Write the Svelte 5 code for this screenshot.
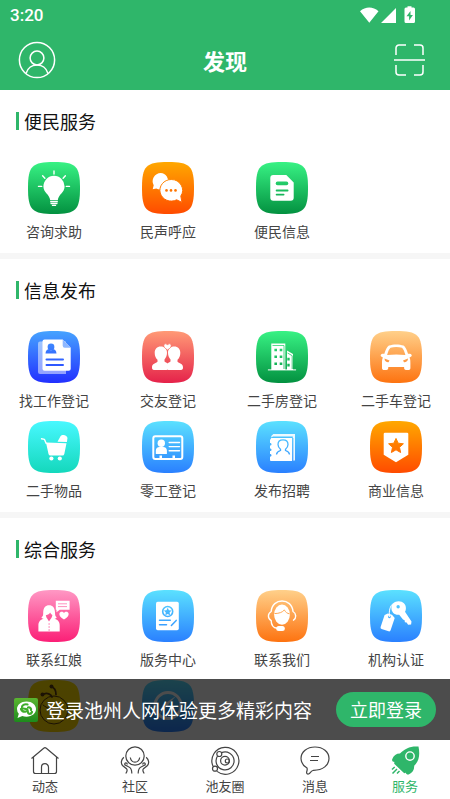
<script lang="ts">
	type Item = { icon: string; from: string; to: string; label?: string }

	const sections: { title: string; items: Item[] }[] = [
		{
			title: '便民服务',
			items: [
				{ icon: 'bulb', from: '#38f284', to: '#039140', label: '咨询求助' },
				{ icon: 'chat', from: '#ffa800', to: '#ff4b00', label: '民声呼应' },
				{ icon: 'doc', from: '#38f284', to: '#039140', label: '便民信息' }
			]
		},
		{
			title: '信息发布',
			items: [
				{ icon: 'resume', from: '#46a3ff', to: '#2230ff', label: '找工作登记' },
				{ icon: 'couple', from: '#ff9a76', to: '#e5224a', label: '交友登记' },
				{ icon: 'building', from: '#38f284', to: '#039140', label: '二手房登记' },
				{ icon: 'car', from: '#ffd08a', to: '#fd7310', label: '二手车登记' },
				{ icon: 'cart', from: '#48f8ff', to: '#14d8bc', label: '二手物品' },
				{ icon: 'card', from: '#5be1ff', to: '#2a80ff', label: '零工登记' },
				{ icon: 'book', from: '#5be1ff', to: '#2a80ff', label: '发布招聘' },
				{ icon: 'shield', from: '#ffa800', to: '#ff4b00', label: '商业信息' }
			]
		},
		{
			title: '综合服务',
			items: [
				{ icon: 'lady', from: '#ff98c4', to: '#fb1f76', label: '联系红娘' },
				{ icon: 'notice', from: '#5be1ff', to: '#2a80ff', label: '版务中心' },
				{ icon: 'support', from: '#ffd08a', to: '#fd7310', label: '联系我们' },
				{ icon: 'keys', from: '#5be1ff', to: '#2a80ff', label: '机构认证' },
				{ icon: 'bee', from: '#ffe000', to: '#ffd800' },
				{ icon: 'compass', from: '#5be1ff', to: '#2a80ff' }
			]
		}
	]

	const tabs = [
		{ icon: 'home', label: '动态' },
		{ icon: 'community', label: '社区' },
		{ icon: 'orbit', label: '池友圈' },
		{ icon: 'message', label: '消息' },
		{ icon: 'rocket', label: '服务' }
	]

	let active = $state('rocket')
</script>

{#snippet glyph(name: string, tint: string)}
	{#if name === 'bulb'}
		<path d="M26 13.8a10.6 10.6 0 0 0-10.6 10.6c0 6.2 6.2 7.6 6.8 13.8h7.6c.6-6.200 6.800-7.600 6.800-13.800A10.600 10.600 0 0 0 26 13.800z" />
		<path class="line" d="M22.700 39.800h6.600M23 41.600h6M24.500 43.400h3M26 9v3M10.500 24.400h3.200M38.300 24.400h3.200M14.600 13.700l2.300 2.600M37.400 13.700l-2.300 2.600" />
	{:else if name === 'chat'}
		<path d="M18.700 11a8.200 8.200 0 0 0-7 12.300l-1 4 3.500-.9A8.200 8.200 0 1 0 18.700 11z" />
		<path stroke={tint} stroke-width="1" d="M29.200 17.500a11.400 10.800 0 1 0 5.500 20.300l5.300 2.600-1.200-6.300a11.400 10.800 0 0 0-9.600-16.600z" />
		<g fill={tint}><circle cx="24.500" cy="28.400" r="1.300" /><circle cx="29" cy="28.400" r="1.300" /><circle cx="33.500" cy="28.400" r="1.300" /></g>
	{:else if name === 'doc'}
		<path d="M17.300 13h13l7.400 7.400v15.300a3 3 0 0 1-3 3H17.300a3 3 0 0 1-3-3V16a3 3 0 0 1 3-3z" />
		<g stroke={tint} stroke-linecap="round"><path stroke-width="3.600" d="M21.500 21.400h9" /><path stroke-width="1.800" d="M20.600 28.500h11M20.600 32.600h7" /></g>
	{:else if name === 'resume'}
		<path opacity="0.500" d="M12 10.500h26V43H12a2 2 0 0 1-2-2V12.500a2 2 0 0 1 2-2z" />
		<path d="M16.500 8.400h18.200l8 8.400v21a2 2 0 0 1-2 2H16.500a2 2 0 0 1-2-2V10.400a2 2 0 0 1 2-2z" />
		<path fill="#8fb8ff" d="M34.700 8.400l8 8.400h-6a2 2 0 0 1-2-2z" />
		<g fill={tint}><circle cx="23" cy="16" r="3.400" /><path d="M17.500 22.500c0-3 2.200-4.400 4-4.400l1.500 1.600 1.500-1.600c1.800 0 4 1.400 4 4.400z" /></g>
		<path stroke={tint} stroke-width="2" stroke-linecap="round" d="M18.500 28.500h16.500M18.500 34h16.500" />
	{:else if name === 'couple'}
		<path d="M18.700 15.500c4 0 6.300 2.600 6.300 6.300 0 3-1 5-2.500 6.700v2c2 1.600 4 1.400 4 4.500 0 2.500-.8 4-2 4H12c-1.500 0-2-.8-2-2.400 0-4 2.800-3.800 5.500-5.800v-2c-1.800-1.500-2.800-4-2.800-7 0-3.700 2.300-6.300 6-6.300z" />
		<path d="M32.300 15.500c-4 0-6.300 2.600-6.300 6.300 0 3 1 5 2.500 6.700v2c-2 1.600-4 1.400-4 4.500 0 2.500.8 4 2 4H39c1.500 0 2-.8 2-2.400 0-4-2.800-3.800-5.500-5.800v-2c1.800-1.500 2.800-4 2.800-7 0-3.700-2.300-6.300-6-6.300z" />
		<path stroke={tint} stroke-width=".7" d="M25.500 19c-3-2-4-3.300-3.600-4.900.5-1.700 2.700-1.700 3.600 0 .9-1.700 3.100-1.700 3.600 0 .4 1.600-.6 2.900-3.600 4.900z" />
	{:else if name === 'building'}
		<path d="M15.300 12.500h14V39h-14zM31 19.500l6 3.600V39h-6z" />
		<path stroke={tint} stroke-width=".8" d="M16.500 14.500h11.500M28 14.500V38M31.500 22l4.700 2.700V38" fill="none" />
		<path class="line thin" d="M12.300 38.900h27.400" />
		<path fill={tint} d="M18.400 17.700h2.600v2.600h-2.600zM23.700 17.700h2.600v2.600h-2.600zM18.400 24.500h2.600v2.600h-2.600zM23.700 24.500h2.600v2.600h-2.600zM18.400 31.400h2.600V34h-2.600zM23.700 31.400h2.600V34h-2.600zM31.300 26.800h2.400v2.600h-2.400zM31.300 32.800h2.400v2.600h-2.400z" />
	{:else if name === 'car'}
		<path d="M19 14.600c4-1.600 10.500-1.600 14.500 0 1.800.9 3.600 5 4.500 8.200 1-.3 3.200-.3 3.700 1.200.3 1.300-1 2.200-2.200 2.400.8 1.500.9 3.500.9 5.500v5c0 1.500-.8 2-2.300 2h-2c-1.600 0-2-.8-2-3H18.300c0 2.200-.4 3-2 3h-2c-1.500 0-2.300-.5-2.300-2v-5c0-2 .1-4 .9-5.500-1.200-.2-2.500-1.100-2.200-2.400.5-1.500 2.700-1.500 3.700-1.200.9-3.200 2.700-7.300 4.600-8.200z" />
		<path fill={tint} d="M20.500 16.700c3.500-1 8-1 11.500 0 1.400 1 2.500 4.200 3.400 7.300-6-.8-12.300-.8-18.300 0 .9-3.100 2-6.300 3.400-7.300zM14.500 27.600l5 2-1 1.600c-2 .1-4-.7-4-3.600zM38 27.600l-5 2 1 1.600c2 .1 4-.7 4-3.600z" />
	{:else if name === 'cart'}
		<path d="M18 21.600l20.500.6L36.300 33a2 2 0 0 1-2 1.600H22.500a2 2 0 0 1-2-1.500z" />
		<path class="line" stroke-width="2" d="M13.500 17.800l3 .6 1.700 4" />
		<path d="M29.500 20.700l3-5.400c1.600-2.600 7.200-.8 6.900 2.200l-.5 3.600z" />
		<circle cx="23.400" cy="37.500" r="2.100" /><circle cx="31.800" cy="37.500" r="2.100" />
	{:else if name === 'card'}
		<rect x="11.300" y="15.200" width="29" height="22.800" rx="2" fill="none" stroke="#fff" stroke-width="2" />
		<circle cx="19.300" cy="22.200" r="3.700" />
		<path d="M13.800 33v-3.500c0-2.500 2-3.600 3.700-3.600h3.700c1.900 0 3.700 1.100 3.700 3.600V33zM17.500 34.400h2.500V37h-2.500zM30.500 34.400H33V37h-2.500z" />
		<path class="line" d="M27.200 21.500h10.300M27.200 25.600h10.300M27.200 29.800h10.300" />
	{:else if name === 'book'}
		<path d="M15.300 16.600v-1.500l2-2H39v26.500h-2.200V15.600H17z" opacity=".9" />
		<path d="M15.300 17H36v23H15.300c-.8 0-1.300-.5-1.300-1.300v-3c2 0 2-2.600 0-2.600v-3c2 0 2-2.600 0-2.600v-3c2 0 2-2.600 0-2.600v-3z" />
		<path fill="none" stroke={tint} stroke-width="1.300" d="M20.500 33.500c.2-2.500 2-3.300 4-4v-1.300c-1.600-1.200-2.500-2.800-2.500-4.600 0-3 2-4.700 5-4.700s5 1.700 5 4.700c0 1.800-.9 3.400-2.500 4.600v1.300c2 .7 3.800 1.500 4 4" />
		<path fill="none" stroke={tint} stroke-width=".7" d="M37 17v22.500" />
	{:else if name === 'shield'}
		<path d="M15 11.800h22a1.300 1.300 0 0 1 1.300 1.300v20.600L26 41.300l-12.300-7.600V13.100a1.300 1.300 0 0 1 1.300-1.300z" />
		<path fill={tint} stroke={tint} stroke-width="1" stroke-linejoin="round" d="M26 17.400l2.200 4.800 5.200.6-3.900 3.500 1.100 5.200-4.600-2.700-4.600 2.700 1.100-5.200-3.900-3.500 5.200-.6z" />
	{:else if name === 'lady'}
		<path d="M10.400 41.600v-6c0-4.200 2.400-6 5.600-7-1.600.2-2.500-.4-2.500-1.300 2-1 1.600-3 1.700-5 .2-4.500 2.300-7 5.900-7s5.700 2.500 5.900 7c.1 2 0 4 1.600 5 0 .9-.9 1.500-2.500 1.300 3.200 1 5.600 2.800 5.600 7v6z" />
		<path fill={tint} d="M17.800 25.200c2.400-.3 3.600-1.200 4.300-2.700.6 1.300 1.300 2 2.300 2.400-.4 2-1.300 3.600-1.800 4.200L21 31.500l-1.500-2.400c-.8-.9-1.400-2.200-1.700-3.900z" />
		<path fill="none" stroke={tint} stroke-width=".6" stroke-dasharray="2 1" d="M21.100 33v8.500" />
		<path d="M27.800 10.800h13.800v9H31.700l-3.200 2.400v-2.400h-.7z" />
		<path fill="none" stroke={tint} stroke-width=".8" d="M30 13.800h9M30 16.600h9" />
		<path d="M36 29.600c-3.500-2.300-5-4-4.600-6.100.5-2.200 3.500-2.500 4.600-.5 1.100-2 4.100-1.700 4.600.5.400 2.100-1.100 3.800-4.600 6.100z" />
	{:else if name === 'notice'}
		<rect x="14" y="11.700" width="22.800" height="28.500" rx="1.700" />
		<circle cx="25.700" cy="21.500" r="5" fill="none" stroke={tint} stroke-width="1.600" />
		<path fill={tint} d="M25.700 17.800l1.200 2.500 2.600.3-1.900 1.900.5 2.700-2.400-1.300-2.400 1.300.5-2.700-1.900-1.900 2.600-.3z" />
		<path stroke={tint} stroke-width="1.500" stroke-linecap="round" d="M17.500 30.300h10.800M17.500 34.700h7M29.400 35.400l4.800-5" />
	{:else if name === 'support'}
		<ellipse cx="26" cy="24.600" rx="7.900" ry="10.200" />
		<path fill="none" stroke={tint} stroke-width="1" d="M18.500 23.600c5-.2 8-1.300 9.800-3.700 1.300 2.400 2.900 3.500 5.300 4" />
		<path class="line" d="M15.200 21.500C16 7.500 36 7.500 37 21.500M15.200 21.500c-3.700 2-3.700 7 0 9.200 0 4 2 7 6 7.600M37 21.500c3.500 2 3.500 6.800.5 8.700" />
		<rect x="20.200" y="36" width="8.600" height="5" rx="2.500" />
	{:else if name === 'keys'}
		<path fill-rule="evenodd" d="M28.600 11.200c4.500 0 7.300 3 7.300 6.700 0 1.500-.2 2.700-.9 3.800l6.500 9.800-.4 3.100-3 .1-1.500-2.300-1.700-.2-.3-2-1.600-.7-3.800-4.800c-4.500.6-7.800-2.600-7.800-6.800 0-3.800 3.100-6.700 7.200-6.700zm-.5 3.800a1.700 1.700 0 1 0 .1 3.400 1.700 1.700 0 0 0-.1-3.400z" />
		<path fill-rule="evenodd" d="M17.800 23.600l4.200 1.100 2.700 3.200-4.100 12.400a1.600 1.600 0 0 1-2 1l-7-2.400a1.600 1.600 0 0 1-1-2l4-11.900zm1.600 2a1.300 1.300 0 1 0 .1 2.600 1.300 1.300 0 0 0-.1-2.600z" />
		<path class="line thin" d="M19.500 26.500c-.8-5 .3-11 3.800-13" />
	{:else if name === 'bee'}
		<g fill="none" stroke="#5a3c10" stroke-width="1.800" stroke-linecap="round">
			<path d="M24 17c-1-3-5-4.500-8-3M28 14.500c0-4-1.500-7-5-8" />
			<circle cx="26" cy="30" r="14" stroke-width="1" /><path d="M15 25c5 4 11 6 20 4" stroke-width="1" />
		</g>
		<circle cx="14.500" cy="14.500" r="2" fill="#5a3c10" /><circle cx="23.500" cy="6.500" r="2" fill="#5a3c10" />
	{:else if name === 'compass'}
		<circle cx="26" cy="25.500" r="13" fill="none" stroke="#fff" stroke-width="3" />
		<path d="M34 16L18 34l2.500-9z" />
	{/if}
{/snippet}

{#snippet tabIcon(name: string)}
	<svg class="tab-icon" viewBox="0 0 30 30">
		{#if name === 'home'}
			<path d="M1.500 13.500L13.700 3.200a2 2 0 0 1 2.600 0L28.500 13.500M3.500 12v14.500a2 2 0 0 0 2 2h19a2 2 0 0 0 2-2V12M11.500 28.500v-6.300a3.500 3.500 0 0 1 7 0v6.300" />
		{:else if name === 'community'}
			<circle cx="15" cy="11" r="9.200" />
			<path d="M10.300 12.500c1 6.200 8.400 6.200 9.400 0M3.800 12.300c-3 2.700-3 6.200-1.300 8.200l4 3.200c1.200 1.400.4 3.300-.7 4.800M7.300 19.500c0-1.800-3-2.400-2.500.3l3.700 2c3.500 1.500 3.300 4 3.300 6.700M26.200 12.300c3 2.700 3 6.200 1.300 8.200l-4 3.200c-1.200 1.400-.4 3.300.7 4.800M22.700 19.500c0-1.800 3-2.400 2.500.3l-3.700 2c-3.500 1.500-3.300 4-3.300 6.700" />
		{:else if name === 'orbit'}
			<path d="M3 21.200a13.500 13.500 0 1 1 4 5.200M11.500 7.600A9 9 0 1 1 7.500 11" />
			<circle cx="15" cy="15.700" r="4.400" /><circle cx="9.300" cy="9" r="2.500" /><circle cx="5" cy="23.700" r="2.500" /><circle cx="17.300" cy="16" r="2" />
		{:else if name === 'message'}
			<path d="M8.500 29c2.200-.8 1.400-2.600 5-3.700C23 25.300 29 20 29 13.600 29 7 23 2 15 2S1 7 1 13.600c0 3.900 1.900 6.900 6 9.400.7 2-.4 3-.4 4.600 0 1 .8 1.700 1.900 1.400zM11 11.500h8M10 15.500h8" />
		{:else}
			<path fill="currentColor" stroke="none" fill-rule="evenodd" d="M28.500 1.500c1.700 8.500.5 14.500-4.300 19.200.2 4-1.700 7.300-5.500 8.800-1.500.4-2.500-.3-3-2-.5 1-1.500.8-2.300 0L5 19.500c-1-.8-1.300-1.700-.3-2.500-2 0-3-1-2.500-2.700C3.500 10.500 6.500 8.500 10 8.600 14.500 3.500 20.500.8 28.500 1.500zM20 6.200a4.900 4.900 0 1 0 0 9.800 4.900 4.900 0 0 0 0-9.800zm0 1.400a3.500 3.500 0 1 1 0 7 3.500 3.500 0 0 1 0-7z" />
			<path stroke-width="1.500" d="M4.700 22L2 24.500M7 24l-4.500 4.500M9.500 26L7 28.500" />
		{/if}
	</svg>
{/snippet}

<div class="app">
	<header>
		<div class="status">
			<span>3:20</span>
			<svg width="56" height="18" viewBox="0 0 56 18" fill="#fff">
				<path d="M0 5.200C5.500.3 13 .3 18.500 5.200L9.300 16.800zM36 2v15H21zM47.500 1.500V.3h4v1.200h2a1.500 1.500 0 0 1 1.500 1.500v12.500a1.500 1.500 0 0 1-1.500 1.500h-7.500a1.500 1.500 0 0 1-1.500-1.500V3A1.500 1.500 0 0 1 46 1.500z" />
				<path fill="#2fb66a" d="M50.500 5l-4 5.300h2.600v4.200l3.800-5.400h-2.400z" />
			</svg>
		</div>
		<nav class="topbar">
			<button class="profile" aria-label="个人">
				<svg width="38" height="38" viewBox="0 0 38 38">
					<circle cx="19" cy="19" r="17.600" /><circle cx="19" cy="17" r="6.900" /><path d="M8 32.500c3-11.500 19-11.500 22 0" />
				</svg>
			</button>
			<h1>发现</h1>
			<button class="scan" aria-label="扫码">
				<svg width="32" height="32" viewBox="0 0 32 32">
					<path d="M2 11V4a3 3 0 0 1 3-3h7M20 1h6a3 3 0 0 1 3 3v7M2 21v7a3 3 0 0 0 3 3h7M20 31h6a3 3 0 0 0 3-3v-7M0 16h31" />
				</svg>
			</button>
		</nav>
	</header>

	<div class="body">
		<main>
			{#each sections as section}
				<section>
					<h2>{section.title}</h2>
					<div class="grid">
						{#each section.items as item}
							<button class="item">
								<svg class="tile" viewBox="0 0 52 52" fill="#fff">
									<defs>
										<linearGradient id={`bg-${item.icon}`} x1="0" y1="0" x2="0" y2="1">
											<stop offset="0" stop-color={item.from} />
											<stop offset="1" stop-color={item.to} />
										</linearGradient>
										<linearGradient id={`ink-${item.icon}`} gradientUnits="userSpaceOnUse" x1="0" y1="0" x2="0" y2="52">
											<stop offset="0" stop-color={item.from} />
											<stop offset="1" stop-color={item.to} />
										</linearGradient>
									</defs>
									<path fill={`url(#bg-${item.icon})`} d="M26 0C48 0 52 4 52 26S48 52 26 52 0 48 0 26 4 0 26 0z" />
									{@render glyph(item.icon, `url(#ink-${item.icon})`)}
								</svg>
								{#if item.label}
									<span>{item.label}</span>
								{/if}
							</button>
						{/each}
					</div>
				</section>
			{/each}
		</main>

		<div class="banner">
			<svg width="24" height="24" viewBox="0 0 24 24">
				<defs>
					<linearGradient id="logo" x1="0" y1="0" x2="0" y2="1">
						<stop offset="0" stop-color="#5bb531" />
						<stop offset="1" stop-color="#1d8a1c" />
					</linearGradient>
				</defs>
				<rect width="24" height="24" rx="2" fill="url(#logo)" />
				<path fill="#fff" d="M12.500 3.500c5.500 0 9.500 3.400 9.500 7.600s-4 7.600-9.500 7.600c-1.500 0-3-.3-4.200-.8L3.500 20l1.300-4.200A6.900 6.900 0 0 1 3 11.100c0-4.200 4-7.600 9.500-7.600z" />
				<path fill="none" stroke="#3fae2a" stroke-width="2.200" stroke-linecap="round" d="M13.500 6.500c-3-.8-6 .8-5.500 3 .5 1.800 3.500.8 5 2 1.500 1 0 3.500 2 4.200 1.500.4 2.500-.5 3-1.700M7 11c1 2.500 3 3 5 2.500M14 9.500c2-.5 3.500 1 3 2.500" />
			</svg>
			<p>登录池州人网体验更多精彩内容</p>
			<button class="login">立即登录</button>
		</div>
	</div>

	<nav class="tabs">
		{#each tabs as tab}
			<button class="tab" class:active={active === tab.icon} onclick={() => (active = tab.icon)}>
				{@render tabIcon(tab.icon)}
				<span>{tab.label}</span>
			</button>
		{/each}
	</nav>
</div>

<style>
	:global(body) {
		margin: 0;
		background: #fff;
	}

	.app {
		display: flex;
		flex-direction: column;
		height: 100vh;
		font-family: 'Noto Sans CJK SC', sans-serif;
		color: #111;
	}

	button {
		padding: 0;
		border: 0;
		background: none;
		font-family: inherit;
		color: inherit;
		cursor: pointer;
	}

	svg {
		display: block;
		flex: none;
	}

	header {
		background: #2fb66a;
		color: #fff;
	}
	.status {
		display: flex;
		align-items: center;
		justify-content: space-between;
		height: 30px;
		padding: 0 34px 0 10px;
		font: 500 17px Roboto, sans-serif;
	}
	.topbar {
		display: grid;
		grid-template-columns: 1fr auto 1fr;
		align-items: center;
		height: 60px;
		padding: 0 18px;
	}
	.topbar svg {
		fill: none;
		stroke: #fff;
		stroke-width: 1.5;
	}
	.profile {
		justify-self: start;
	}
	.scan {
		justify-self: end;
		padding: 0 6px;
	}
	h1 {
		margin: 0;
		font-size: 22px;
		line-height: 30px;
		font-weight: 700;
	}

	.body {
		position: relative;
		flex: 1;
		min-height: 0;
	}
	main {
		height: 100%;
		overflow-y: auto;
		scrollbar-width: none;
	}
	section {
		padding: 19px 16px 11px;
	}
	section + section {
		border-top: 6px solid #f6f6f6;
	}
	h2 {
		display: flex;
		align-items: center;
		gap: 5px;
		margin: 0 0 29px;
		font-size: 18px;
		line-height: 24px;
		font-weight: 400;
	}
	h2::before {
		content: '';
		width: 3px;
		height: 18px;
		background: #2fb66a;
	}
	.grid {
		display: grid;
		grid-template-columns: repeat(4, 76px);
		justify-content: space-between;
		row-gap: 10px;
	}
	.item {
		display: flex;
		flex-direction: column;
		align-items: center;
		gap: 7px;
		font-size: 14px;
		line-height: 21px;
		color: #444;
		white-space: nowrap;
	}
	.tile {
		width: 52px;
		height: 52px;
	}
	.line {
		fill: none;
		stroke: #fff;
		stroke-width: 1.4;
		stroke-linecap: round;
		stroke-linejoin: round;
	}
	.thin {
		stroke-width: 1;
	}

	.banner {
		position: absolute;
		inset: auto 0 0;
		display: flex;
		align-items: center;
		gap: 8px;
		height: 61px;
		padding: 0 14px;
		box-sizing: border-box;
		background: rgba(0, 0, 0, .7);
		color: #fff;
	}
	.banner p {
		flex: 1;
		margin: 0;
		font-size: 19px;
		line-height: 28px;
		white-space: nowrap;
	}
	.login {
		padding: 0 14px;
		border-radius: 18px;
		background: #2fb66a;
		font-size: 18px;
		line-height: 35px;
	}

	.tabs {
		display: grid;
		grid-template-columns: repeat(5, 1fr);
		height: 59px;
		background: #fff;
	}
	.tab {
		display: flex;
		flex-direction: column;
		align-items: center;
		padding-top: 5px;
		font-size: 13px;
		line-height: 22px;
		color: #444;
	}
	.active {
		color: #2fb66a;
	}
	.tab-icon {
		width: 30px;
		height: 30px;
		fill: none;
		stroke: currentColor;
		stroke-width: 1.2;
	}
</style>
